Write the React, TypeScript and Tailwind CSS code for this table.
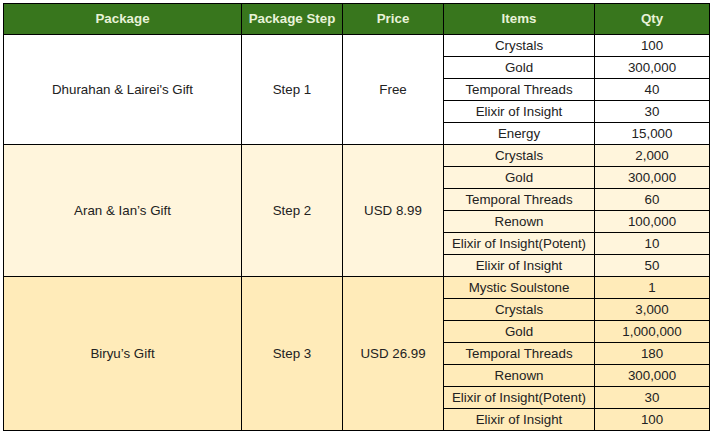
const groups = [
    {
        name: "Dhurahan & Lairei's Gift",
        step: 'Step 1',
        price: 'Free',
        bg: 'bg-white',
        items: [
            ['Crystals', '100'],
            ['Gold', '300,000'],
            ['Temporal Threads', '40'],
            ['Elixir of Insight', '30'],
            ['Energy', '15,000'],
        ],
    },
    {
        name: 'Aran & Ian’s Gift',
        step: 'Step 2',
        price: 'USD 8.99',
        bg: 'bg-[#fff5dc]',
        items: [
            ['Crystals', '2,000'],
            ['Gold', '300,000'],
            ['Temporal Threads', '60'],
            ['Renown', '100,000'],
            ['Elixir of Insight(Potent)', '10'],
            ['Elixir of Insight', '50'],
        ],
    },
    {
        name: 'Biryu’s Gift',
        step: 'Step 3',
        price: 'USD 26.99',
        bg: 'bg-[#ffebb9]',
        items: [
            ['Mystic Soulstone', '1'],
            ['Crystals', '3,000'],
            ['Gold', '1,000,000'],
            ['Temporal Threads', '180'],
            ['Renown', '300,000'],
            ['Elixir of Insight(Potent)', '30'],
            ['Elixir of Insight', '100'],
        ],
    },
];

const cell = 'border border-black text-center p-0';

export default function App() {
    return (
        <div className="w-[713px] h-[436px] bg-white pt-[3px] pl-[3px] font-['Liberation_Sans',Arial,sans-serif] text-[13.33px] text-[#222]">
            <table className="table-fixed border-collapse w-[706px]">
                <colgroup>
                    <col className="w-[238px]" />
                    <col className="w-[101px]" />
                    <col className="w-[101px]" />
                    <col className="w-[151px]" />
                    <col className="w-[115px]" />
                </colgroup>
                <thead>
                    <tr className="h-[31px] bg-[#38761d] text-[#e8f2d8] font-bold">
                        <th className={cell}>Package</th>
                        <th className={cell}>Package Step</th>
                        <th className={cell}>Price</th>
                        <th className={cell}>Items</th>
                        <th className={cell}>Qty</th>
                    </tr>
                </thead>
                <tbody>
                    {groups.map((g) =>
                        g.items.map(([item, qty], i) => (
                            <tr key={g.step + i} className={`h-[22px] ${g.bg}`}>
                                {i === 0 && (
                                    <>
                                        <td className={cell} rowSpan={g.items.length}>
                                            {g.name}
                                        </td>
                                        <td className={cell} rowSpan={g.items.length}>
                                            {g.step}
                                        </td>
                                        <td className={cell} rowSpan={g.items.length}>
                                            {g.price}
                                        </td>
                                    </>
                                )}
                                <td className={cell}>{item}</td>
                                <td className={cell}>{qty}</td>
                            </tr>
                        ))
                    )}
                </tbody>
            </table>
        </div>
    );
}
